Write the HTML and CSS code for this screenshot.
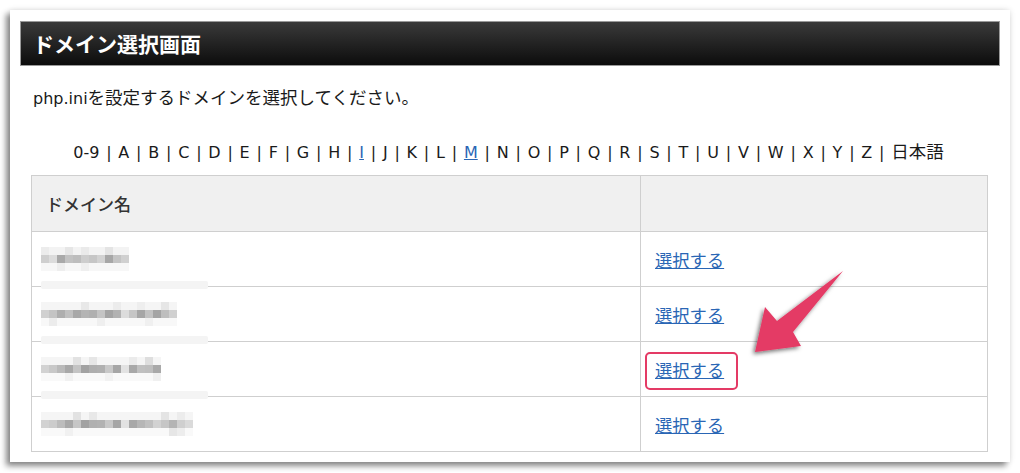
FILE: index.html
```html
<!DOCTYPE html>
<html lang="ja">
<head>
<meta charset="utf-8">
<link rel="stylesheet" href="styles.css">
</head>
<body>
<div class="card">
  <h1 class="title">ドメイン選択画面</h1>
  <p class="desc">php.ini<span class="ja">を設定するドメインを選択してください。</span></p>
  <div class="alpha">0-9 | A | B | C | D | E | F | G | H | <a href="#">I</a> | J | K | L | <a href="#">M</a> | N | O | P | Q | R | S | T | U | V | W | X | Y | Z | <span class="ja">日本語</span></div>
  <table class="domains">
    <thead>
      <tr><th class="c1">ドメイン名</th><th class="c2"></th></tr>
    </thead>
    <tbody>
      <tr>
        <td class="name">
          <svg class="mosaic" width="88" height="24" viewBox="0 0 88 24">
            <g fill="#f3f3f3"><rect x="0" y="0" width="88" height="8"/></g>
            <rect x="0" y="0" width="8" height="8" fill="#ececec"/><rect x="24" y="0" width="8" height="8" fill="#e6e6e6"/><rect x="40" y="0" width="8" height="8" fill="#eaeaea"/><rect x="64" y="0" width="8" height="8" fill="#e4e4e4"/>
            <rect x="0" y="8" width="8" height="8" fill="#cfcfcf"/><rect x="8" y="8" width="8" height="8" fill="#dcdcdc"/><rect x="16" y="8" width="8" height="8" fill="#a9a9a9"/><rect x="24" y="8" width="8" height="8" fill="#c2c2c2"/><rect x="32" y="8" width="8" height="8" fill="#bdbdbd"/><rect x="40" y="8" width="8" height="8" fill="#cdcdcd"/><rect x="48" y="8" width="8" height="8" fill="#c6c6c6"/><rect x="56" y="8" width="8" height="8" fill="#d2d2d2"/><rect x="64" y="8" width="8" height="8" fill="#a7a7a7"/><rect x="72" y="8" width="8" height="8" fill="#c4c4c4"/><rect x="80" y="8" width="8" height="8" fill="#d0d0d0"/>
            <rect x="0" y="16" width="88" height="8" fill="#f7f7f7"/><rect x="16" y="16" width="8" height="8" fill="#eeeeee"/><rect x="40" y="16" width="8" height="8" fill="#efefef"/>
          </svg>
          <span class="band"></span>
        </td>
        <td><a href="#">選択する</a></td>
      </tr>
      <tr>
        <td class="name">
          <svg class="mosaic" width="136" height="24" viewBox="0 0 136 24">
            <rect x="0" y="0" width="136" height="8" fill="#f5f5f5"/><rect x="40" y="0" width="8" height="8" fill="#e8e8e8"/><rect x="72" y="0" width="8" height="8" fill="#ececec"/><rect x="120" y="0" width="8" height="8" fill="#e6e6e6"/><rect x="96" y="0" width="8" height="8" fill="#eeeeee"/>
            <rect x="0" y="8" width="8" height="8" fill="#d0d0d0"/><rect x="8" y="8" width="8" height="8" fill="#c4c4c4"/><rect x="16" y="8" width="8" height="8" fill="#aeaeae"/><rect x="24" y="8" width="8" height="8" fill="#c0c0c0"/><rect x="32" y="8" width="8" height="8" fill="#a8a8a8"/><rect x="40" y="8" width="8" height="8" fill="#b4b4b4"/><rect x="48" y="8" width="8" height="8" fill="#b0b0b0"/><rect x="56" y="8" width="8" height="8" fill="#c4c4c4"/><rect x="64" y="8" width="8" height="8" fill="#a4a4a4"/><rect x="72" y="8" width="8" height="8" fill="#b2b2b2"/><rect x="80" y="8" width="8" height="8" fill="#dcdcdc"/><rect x="88" y="8" width="8" height="8" fill="#c6c6c6"/><rect x="96" y="8" width="8" height="8" fill="#a6a6a6"/><rect x="104" y="8" width="8" height="8" fill="#c2c2c2"/><rect x="112" y="8" width="8" height="8" fill="#a4a4a4"/><rect x="120" y="8" width="8" height="8" fill="#bebebe"/><rect x="128" y="8" width="8" height="8" fill="#d0d0d0"/>
            <rect x="0" y="16" width="136" height="8" fill="#f8f8f8"/><rect x="8" y="16" width="8" height="8" fill="#ececec"/><rect x="56" y="16" width="8" height="8" fill="#efefef"/><rect x="104" y="16" width="8" height="8" fill="#f0f0f0"/>
          </svg>
          <span class="band"></span>
        </td>
        <td><a href="#">選択する</a></td>
      </tr>
      <tr>
        <td class="name">
          <svg class="mosaic" width="120" height="24" viewBox="0 0 120 24">
            <rect x="0" y="0" width="120" height="8" fill="#f5f5f5"/><rect x="32" y="0" width="8" height="8" fill="#e2e2e2"/><rect x="48" y="0" width="8" height="8" fill="#e6e6e6"/><rect x="104" y="0" width="8" height="8" fill="#dedede"/><rect x="88" y="0" width="8" height="8" fill="#ebebeb"/>
            <rect x="0" y="8" width="8" height="8" fill="#d2d2d2"/><rect x="8" y="8" width="8" height="8" fill="#c8c8c8"/><rect x="16" y="8" width="8" height="8" fill="#bababa"/><rect x="24" y="8" width="8" height="8" fill="#a8a8a8"/><rect x="32" y="8" width="8" height="8" fill="#c4c4c4"/><rect x="40" y="8" width="8" height="8" fill="#a2a2a2"/><rect x="48" y="8" width="8" height="8" fill="#aeaeae"/><rect x="56" y="8" width="8" height="8" fill="#b0b0b0"/><rect x="64" y="8" width="8" height="8" fill="#c8c8c8"/><rect x="72" y="8" width="8" height="8" fill="#a6a6a6"/><rect x="80" y="8" width="8" height="8" fill="#e2e2e2"/><rect x="88" y="8" width="8" height="8" fill="#a8a8a8"/><rect x="96" y="8" width="8" height="8" fill="#c0c0c0"/><rect x="104" y="8" width="8" height="8" fill="#bebebe"/><rect x="112" y="8" width="8" height="8" fill="#a9a9a9"/>
            <rect x="0" y="16" width="120" height="8" fill="#f9f9f9"/><rect x="24" y="16" width="8" height="8" fill="#f1f1f1"/><rect x="64" y="16" width="8" height="8" fill="#f2f2f2"/><rect x="112" y="16" width="8" height="8" fill="#f0f0f0"/>
          </svg>
          <span class="band"></span>
        </td>
        <td><a href="#" class="hl">選択する</a></td>
      </tr>
      <tr>
        <td class="name">
          <svg class="mosaic" width="152" height="24" viewBox="0 0 152 24">
            <rect x="0" y="0" width="152" height="8" fill="#f5f5f5"/><rect x="32" y="0" width="8" height="8" fill="#e2e2e2"/><rect x="48" y="0" width="8" height="8" fill="#e8e8e8"/><rect x="120" y="0" width="8" height="8" fill="#e4e4e4"/><rect x="136" y="0" width="8" height="8" fill="#ececec"/>
            <rect x="0" y="8" width="8" height="8" fill="#d2d2d2"/><rect x="8" y="8" width="8" height="8" fill="#cccccc"/><rect x="16" y="8" width="8" height="8" fill="#bcbcbc"/><rect x="24" y="8" width="8" height="8" fill="#a8a8a8"/><rect x="32" y="8" width="8" height="8" fill="#c6c6c6"/><rect x="40" y="8" width="8" height="8" fill="#a2a2a2"/><rect x="48" y="8" width="8" height="8" fill="#b0b0b0"/><rect x="56" y="8" width="8" height="8" fill="#b2b2b2"/><rect x="64" y="8" width="8" height="8" fill="#c8c8c8"/><rect x="72" y="8" width="8" height="8" fill="#a6a6a6"/><rect x="80" y="8" width="8" height="8" fill="#e2e2e2"/><rect x="88" y="8" width="8" height="8" fill="#a8a8a8"/><rect x="96" y="8" width="8" height="8" fill="#b6b6b6"/><rect x="104" y="8" width="8" height="8" fill="#c0c0c0"/><rect x="112" y="8" width="8" height="8" fill="#d2d2d2"/><rect x="120" y="8" width="8" height="8" fill="#c6c6c6"/><rect x="128" y="8" width="8" height="8" fill="#b4b4b4"/><rect x="136" y="8" width="8" height="8" fill="#cfcfcf"/><rect x="144" y="8" width="8" height="8" fill="#dadada"/>
            <rect x="0" y="16" width="152" height="8" fill="#f9f9f9"/><rect x="24" y="16" width="8" height="8" fill="#f1f1f1"/><rect x="128" y="16" width="8" height="8" fill="#e6e6e6"/><rect x="136" y="16" width="8" height="8" fill="#ededed"/>
          </svg>
        </td>
        <td><a href="#">選択する</a></td>
      </tr>
    </tbody>
  </table>
  <svg class="arrow" width="110" height="100" viewBox="740 262 110 100">
    <defs>
      <filter id="sh" x="-30%" y="-30%" width="160%" height="160%">
        <feDropShadow dx="-2" dy="2" stdDeviation="2" flood-color="#000" flood-opacity="0.55"/>
      </filter>
    </defs>
    <polygon filter="url(#sh)" fill="#e43a65" points="843,271 793,332 801,346 755,352 765,307 777,321"/>
  </svg>
</div>
</body>
</html>
```
FILE: styles.css
```css
html, body {
  margin: 0;
  padding: 0;
  background: #ffffff;
}
body {
  font-family: "DejaVu Sans", "Noto Sans CJK JP", sans-serif;
  color: #1a1a1a;
}
.card {
  position: relative;
  margin: 10px;
  width: 1000px;
  height: 452px;
  box-sizing: border-box;
  padding: 11px 10px 0 10px;
  background: #fff;
  box-shadow: -4px 4px 6px rgba(0,0,0,0.45), 0 0 6px rgba(0,0,0,0.12);
}
.title {
  margin: 0;
  height: 45px;
  box-sizing: border-box;
  border: 1px solid #9a9a9a;
  background: linear-gradient(#3a3a3a, #0c0c0c);
  color: #fff;
  font-family: "Noto Sans CJK JP", sans-serif;
  font-weight: 700;
  font-size: 21px;
  line-height: 43px;
  padding-left: 12px;
}
.ja {
  font-family: "Noto Sans CJK JP", sans-serif;
  font-size: 17.5px;
  line-height: 20px;
}
.desc {
  margin: 21px 0 0 0;
  padding-left: 13px;
  font-size: 16px;
  line-height: 24px;
  height: 24px;
}
.alpha {
  margin-top: 30px;
  height: 24px;
  text-align: center;
  font-size: 16px;
  line-height: 24px;
  word-spacing: 1.7px;
  padding-right: 3px;
}
.alpha a {
  color: #2a66b5;
}
.domains {
  margin: 10px 11px 0 11px;
  width: 957px;
  border-collapse: collapse;
}
.domains th, .domains td {
  border: 1px solid #cfcfcf;
  height: 55px;
  box-sizing: border-box;
  padding: 0 14px;
  text-align: left;
}
.domains th {
  background: #f0f0f0;
  font-family: "Noto Sans CJK JP", sans-serif;
  font-weight: 500;
  color: #333;
  font-size: 17px;
  height: 56px;
}
.c1 { width: 609px; }
.domains td a {
  font-family: "Noto Sans CJK JP", sans-serif;
  font-size: 17.3px;
  color: #2a66b5;
  text-decoration: underline;
}
.domains td.name {
  position: relative;
  padding-left: 9px;
}
.mosaic {
  display: block;
}
.band {
  position: absolute;
  left: 9px;
  bottom: -3px;
  width: 167px;
  height: 8px;
  background: #f4f4f4;
  border-radius: 2px;
  z-index: 1;
}
.hl {
  position: relative;
}
.hl::after {
  content: "";
  position: absolute;
  left: -10px;
  top: -5px;
  right: -14px;
  bottom: -8px;
  border: 2.5px solid #e43a65;
  border-radius: 5px;
}
.arrow {
  position: absolute;
  left: 730px;
  top: 252px;
}
```
